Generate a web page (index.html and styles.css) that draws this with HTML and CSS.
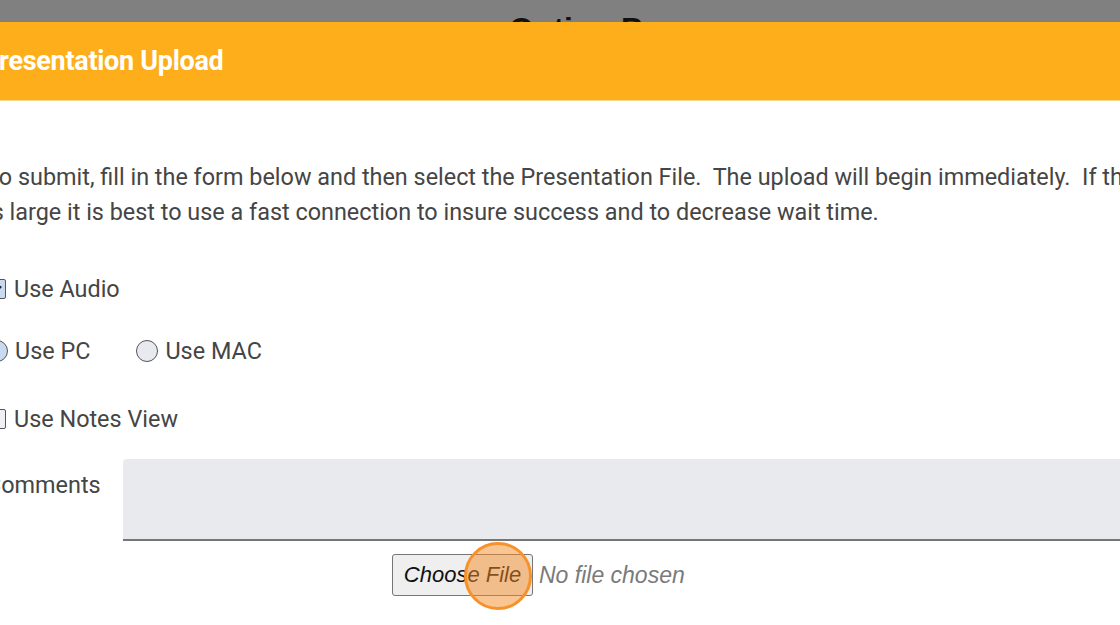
FILE: index.html
```html
<!DOCTYPE html>
<html lang="en">
<head>
<meta charset="utf-8">
<title>Presentation Upload</title>
<link rel="stylesheet" href="styles.css">
</head>
<body>
<div class="backdrop">
  <div class="page-title">Option Page</div>
</div>
<div class="modal">
  <div class="modal-header">
    <h2 class="modal-title">Presentation Upload</h2>
  </div>
  <div class="modal-body">
    <p class="intro">To submit, fill in the form below and then select the Presentation File.&nbsp; The upload will begin immediately.&nbsp; If the file is large it is best to use a fast connection to insure success and to decrease wait time.</p>
    <div class="row row-audio">
      <label class="opt"><span class="box checked"><span class="tick"></span></span>Use Audio</label>
    </div>
    <div class="row row-platform">
      <label class="opt"><span class="radio on"></span>Use PC</label>
      <label class="opt"><span class="radio"></span>Use MAC</label>
    </div>
    <div class="row row-notes">
      <label class="opt"><span class="box"></span>Use Notes View</label>
    </div>
    <div class="row row-comments">
      <span class="field-label">Comments</span>
      <textarea class="comments"></textarea>
    </div>
    <div class="row row-file">
      <span class="file-btn">Choose File</span>
      <span class="file-name">No file chosen</span>
      <span class="cursor-ring"></span>
    </div>
  </div>
</div>
</body>
</html>
```
FILE: styles.css
```css
html, body {
  margin: 0;
  padding: 0;
  width: 1120px;
  height: 625px;
  overflow: hidden;
  background: #ffffff;
}
body {
  font-family: Roboto, "Liberation Sans", sans-serif;
  color: #454545;
}
.backdrop {
  height: 22px;
  background: #808080;
  overflow: hidden;
  position: relative;
}
.page-title {
  position: absolute;
  left: 509px;
  top: 13px;
  font-family: "Liberation Sans", sans-serif;
  font-weight: 700;
  font-size: 32px;
  line-height: 32px;
  color: #111;
  white-space: nowrap;
}
.modal {
  margin-left: -30px;
  width: 1300px;
}
.modal-header {
  height: 79px;
  background: #feae1a;
  border-bottom: 1px solid #f5d88a;
  box-sizing: border-box;
  display: flex;
  align-items: center;
  padding-left: 12px;
}
.modal-title {
  margin: 0;
  color: #ffffff;
  font-family: Roboto, sans-serif;
  font-weight: 700;
  font-size: 27px;
  letter-spacing: -0.3px;
  padding-bottom: 1px;
}
.modal-body {
  padding-left: 16px;
  position: relative;
}
.intro {
  margin: 59px 0 0 0;
  width: 1196px;
  font-size: 23.4px;
  line-height: 35px;
}
.row {
  display: flex;
  align-items: center;
  font-size: 23.4px;
  line-height: 30px;
}
.row-audio { margin-top: 44px; }
.row-platform { margin-top: 32px; gap: 46px; }
.row-notes { margin-top: 38px; }
.opt {
  display: flex;
  align-items: center;
  gap: 8px;
}
.box {
  width: 18px;
  height: 18px;
  border: 1px solid #555;
  border-radius: 2px;
  background: #eef0f4;
  position: relative;
}
.box.checked {
  background: #c9d9ef;
}
.tick {
  position: absolute;
  left: 5px;
  top: 3px;
  width: 5px;
  height: 9px;
  border-right: 2px solid #222;
  border-bottom: 2px solid #222;
  transform: rotate(45deg);
}
.radio {
  width: 20px;
  height: 20px;
  border: 1px solid #555;
  border-radius: 50%;
  background: #e8eaf0;
  margin-right: -1px;
}
.radio.on {
  background: #c9d9ef;
}
.row-comments {
  margin-top: 25px;
  align-items: flex-start;
}
.field-label {
  width: 137px;
  padding-top: 11px;
}
.comments {
  width: 1100px;
  height: 80px;
  box-sizing: content-box;
  margin: 0;
  padding: 0;
  border: none;
  border-bottom: 2px solid #767676;
  border-radius: 4px 4px 0 0;
  background: #e8eaee;
  resize: none;
}
.row-file {
  margin-top: 13px;
  padding-left: 406px;
  position: relative;
  font-family: "Liberation Sans", Arial, sans-serif;
  font-style: italic;
  font-size: 22px;
}
.file-btn {
  box-sizing: border-box;
  height: 42px;
  width: 141px;
  display: flex;
  align-items: center;
  justify-content: center;
  background: #efefef;
  border: 1px solid #767676;
  border-radius: 3px;
  color: #111;
}
.file-name {
  margin-left: 6px;
  color: #7a7a7a;
  font-size: 23px;
}
.cursor-ring {
  position: absolute;
  left: 478px;
  top: -12px;
  width: 62px;
  height: 62px;
  border-radius: 50%;
  border: 3px solid #f7912a;
  background: rgba(244, 140, 40, 0.5);
}
```
